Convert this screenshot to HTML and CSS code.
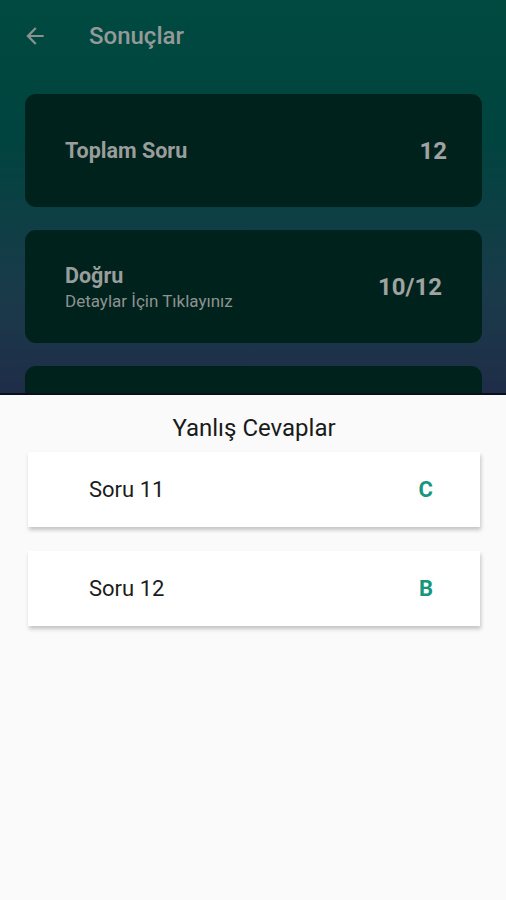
FILE: index.html
```html
<!DOCTYPE html>
<html lang="tr">
<head>
  <meta charset="UTF-8">
  <meta name="viewport" content="width=device-width, initial-scale=1.0">
  <title>Sonuçlar</title>
  <link rel="stylesheet" href="styles.css">
</head>
<body>

  <div class="screen">
    <header class="toolbar">
      <svg class="back" width="24" height="24" viewBox="0 0 24 24">
        <path d="M20 11H7.83l5.59-5.59L12 4l-8 8 8 8 1.41-1.41L7.83 13H20v-2z" fill="currentColor"/>
      </svg>
      <h1>Sonuçlar</h1>
    </header>

    <div class="stats">
      <div class="stat">
        <div class="stat-text">
          <span class="stat-label">Toplam Soru</span>
        </div>
        <span class="stat-value">12</span>
      </div>
      <div class="stat">
        <div class="stat-text">
          <span class="stat-label">Doğru</span>
          <span class="stat-sub">Detaylar İçin Tıklayınız</span>
        </div>
        <span class="stat-value wide">10/12</span>
      </div>
      <div class="stat"></div>
    </div>
  </div>

  <div class="sheet">
    <h2>Yanlış Cevaplar</h2>
    <div class="answer">
      <span class="answer-q">Soru 11</span>
      <span class="answer-key">C</span>
    </div>
    <div class="answer">
      <span class="answer-q">Soru 12</span>
      <span class="answer-key">B</span>
    </div>
  </div>

</body>
</html>
```

FILE: styles.css
```css
* {
  box-sizing: border-box;
}
html, body {
  height: 100%;
}
body {
  margin: 0;
  font-family: Roboto, 'Noto Sans', sans-serif;
  background: #fafafa;
  overflow: hidden;
}
.screen {
  height: 393px;
  overflow: hidden;
  background: linear-gradient(to bottom, #004a40 0%, #00443f 35%, #1a3a4a 75%, #1f2d48 100%);
}
.toolbar {
  display: flex;
  align-items: center;
  height: 72px;
  padding-left: 22px;
}
.back {
  width: 26px;
  height: 26px;
  color: #8a9290;
}
.toolbar h1 {
  margin: 0 0 0 41px;
  font-size: 24px;
  font-weight: 500;
  color: #959998;
}
.stats {
  display: flex;
  flex-direction: column;
  gap: 23px;
  padding: 22px 24px 0 25px;
}
.stat {
  display: flex;
  align-items: center;
  justify-content: space-between;
  height: 113px;
  padding: 0 35px 0 40px;
  background: #00221c;
  border-radius: 11px;
}
.stat-text {
  display: flex;
  flex-direction: column;
  gap: 3px;
}
.stat-label {
  font-size: 21.5px;
  font-weight: 700;
  color: #999d9b;
}
.stat-sub {
  font-size: 17px;
  color: #8e9391;
}
.stat-value {
  font-size: 24px;
  font-weight: 700;
  color: #a0a3a1;
}
.stat-value.wide {
  margin-right: 5px;
}
.sheet {
  border-top: 2px solid #0a0f1e;
  padding: 19px 26px 0 28px;
}
.sheet h2 {
  margin: 0 0 10px;
  text-align: center;
  font-size: 24px;
  font-weight: 400;
  color: #1a1a1a;
}
.answer {
  display: flex;
  align-items: center;
  justify-content: space-between;
  height: 75px;
  margin-bottom: 24px;
  padding: 0 47px 0 61px;
  background: #fff;
  box-shadow: 1px 3px 4px rgba(0, 0, 0, 0.22);
}
.answer-q {
  font-size: 22px;
  color: #1c1c1c;
}
.answer-key {
  font-size: 22px;
  font-weight: 700;
  color: #17967f;
}
```
